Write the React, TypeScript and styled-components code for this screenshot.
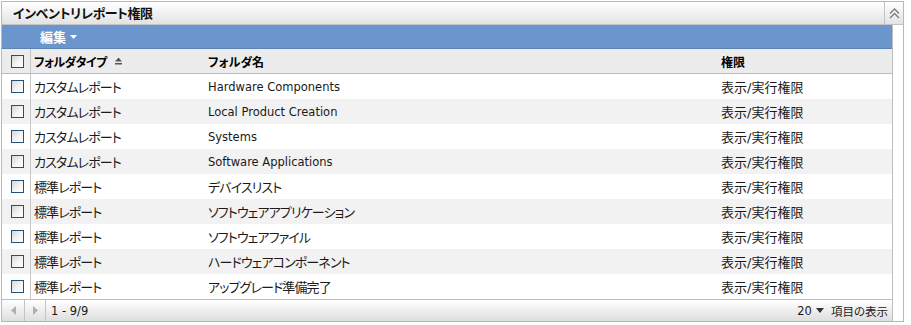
import React from "react";
import styled, { createGlobalStyle } from "styled-components";

const Global = createGlobalStyle`
  html, body { margin: 0; padding: 0; background: #fff; }
  body {
    font-family: "DejaVu Sans", "Noto Sans CJK JP", sans-serif;
    font-size: 12px;
    color: #1a1a1a;
    font-feature-settings: "palt";
  }
`;

const Panel = styled.div`
  box-sizing: border-box;
  width: 903px;
  margin: 1px 0 0 1px;
  border: 1px solid #b8b8b8;
  background: #fff;
`;

const TitleBar = styled.div`
  display: flex;
  height: 23px;
  box-sizing: border-box;
  border-bottom: 1px solid #c2c2c2;
  background: linear-gradient(#ffffff, #e3e3e3);
`;

const TitleText = styled.div`
  flex: 1;
  padding-left: 11px;
  font-family: "Noto Sans CJK JP", sans-serif;
  font-weight: bold;
  font-size: 13px;
  letter-spacing: -0.4px;
  line-height: 22px;
  color: #111;
`;

const CollapseButton = styled.div`
  width: 18px;
  border-left: 1px solid #c2c2c2;
  display: flex;
  align-items: center;
  justify-content: center;
`;

const Body = styled.div`
  display: flex;
  padding-right: 10px;
`;

const TableArea = styled.div`
  flex: 1;
  border-right: 1px solid #bdbdbd;
`;

const Toolbar = styled.div`
  height: 24px;
  box-sizing: border-box;
  background: #6a96cd;
  border-bottom: 1px solid #5b83b6;
  display: flex;
  align-items: center;
  padding-left: 38px;
`;

const EditMenu = styled.div`
  display: flex;
  align-items: center;
  gap: 4px;
  color: #fff;
  font-family: "Noto Sans CJK JP", sans-serif;
  font-weight: bold;
  font-size: 13px;
`;

const Grid = styled.div<{ $bg?: string; $header?: boolean }>`
  display: grid;
  grid-template-columns: 29px 174px 513px 1fr;
  height: 25px;
  box-sizing: border-box;
  background: ${(p) => p.$bg || "#fff"};
  border-bottom: ${(p) => (p.$header ? "1px solid #bcbcbc" : "none")};
  font-weight: ${(p) => (p.$header ? "bold" : "normal")};
  font-size: ${(p) => (p.$header ? "12px" : "13px")};
  color: ${(p) => (p.$header ? "#000" : "#1a1a1a")};
`;

const CheckCell = styled.div`
  border-right: 1px solid #c6c6c6;
  display: flex;
  align-items: center;
  padding-left: 9px;
`;

const Cell = styled.div<{ $latin?: boolean; $tight?: boolean }>`
  display: flex;
  align-items: center;
  gap: 8px;
  padding-left: 3px;
  white-space: nowrap;
  overflow: hidden;
  font-size: ${(p) => (p.$latin ? "11.5px" : "inherit")};
  letter-spacing: ${(p) => (p.$tight ? "-0.9px" : "normal")};
`;

const HeaderLabel = styled.span`
  letter-spacing: -0.6px;
`;

const Box = styled.span`
  display: inline-block;
  width: 13px;
  height: 13px;
  box-sizing: border-box;
  border: 1px solid #24507c;
  background: linear-gradient(135deg, #d6d6d6 0%, #f4f4f4 55%, #ffffff 100%);
`;

const Footer = styled.div`
  display: flex;
  align-items: stretch;
  height: 22px;
  box-sizing: border-box;
  border-top: 1px solid #bcbcbc;
  background: linear-gradient(#ffffff, #dedede);
  font-size: 11.5px;
`;

const NavButton = styled.div<{ $w: number }>`
  width: ${(p) => p.$w}px;
  box-sizing: border-box;
  border-right: 1px solid #c4c4c4;
  display: flex;
  align-items: center;
  justify-content: center;
`;

const PageInfo = styled.div`
  flex: 1;
  display: flex;
  align-items: center;
  padding-left: 5px;
`;

const PageSize = styled.div`
  display: flex;
  align-items: center;
  gap: 4px;
  padding-right: 4px;
`;

const PageLabel = styled.span`
  margin-left: 3px;
  font-size: 11.5px;
`;

const SortIcon = () => (
  <svg width="7" height="8" viewBox="0 0 7 8">
    <polygon points="0,4.5 3.5,0.5 7,4.5" fill="#555" />
    <rect x="0" y="6" width="7" height="1.5" fill="#555" />
  </svg>
);

const rows: [string, string, boolean][] = [
  ["カスタムレポート", "Hardware Components", true],
  ["カスタムレポート", "Local Product Creation", true],
  ["カスタムレポート", "Systems", true],
  ["カスタムレポート", "Software Applications", true],
  ["標準レポート", "デバイスリスト", false],
  ["標準レポート", "ソフトウェアアプリケーション", false],
  ["標準レポート", "ソフトウェアファイル", false],
  ["標準レポート", "ハードウェアコンポーネント", false],
  ["標準レポート", "アップグレード準備完了", false],
];

export default function App() {
  return (
    <>
      <Global />
      <Panel>
        <TitleBar>
          <TitleText>インベントリレポート権限</TitleText>
          <CollapseButton>
            <svg width="11" height="11" viewBox="0 0 11 11">
              <polyline points="1,5.5 5.5,1 10,5.5" fill="none" stroke="#7a7a7a" strokeWidth="1.3" />
              <polyline points="1,10 5.5,5.5 10,10" fill="none" stroke="#7a7a7a" strokeWidth="1.3" />
            </svg>
          </CollapseButton>
        </TitleBar>
        <Body>
          <TableArea>
            <Toolbar>
              <EditMenu>
                編集
                <svg width="7" height="4" viewBox="0 0 7 4">
                  <polygon points="0,0 7,0 3.5,4" fill="#fff" />
                </svg>
              </EditMenu>
            </Toolbar>
            <Grid $header $bg="#ececec">
              <CheckCell>
                <Box />
              </CheckCell>
              <Cell>
                <HeaderLabel>フォルダタイプ</HeaderLabel>
                <SortIcon />
              </Cell>
              <Cell>フォルダ名</Cell>
              <Cell>権限</Cell>
            </Grid>
            {rows.map(([type, name, latin], i) => (
              <Grid key={i} $bg={i % 2 === 1 ? "#f2f2f2" : "#fff"}>
                <CheckCell>
                  <Box />
                </CheckCell>
                <Cell $tight>{type}</Cell>
                <Cell $latin={latin} $tight={!latin}>
                  {name}
                </Cell>
                <Cell>表示/実行権限</Cell>
              </Grid>
            ))}
            <Footer>
              <NavButton $w={23}>
                <svg width="5" height="9" viewBox="0 0 5 9">
                  <polygon points="5,0 0,4.5 5,9" fill="#b0b0b0" />
                </svg>
              </NavButton>
              <NavButton $w={21}>
                <svg width="5" height="9" viewBox="0 0 5 9">
                  <polygon points="0,0 5,4.5 0,9" fill="#b0b0b0" />
                </svg>
              </NavButton>
              <PageInfo>1 - 9/9</PageInfo>
              <PageSize>
                20
                <svg width="8" height="5" viewBox="0 0 8 5">
                  <polygon points="0,0 8,0 4,5" fill="#333" />
                </svg>
                <PageLabel>項目の表示</PageLabel>
              </PageSize>
            </Footer>
          </TableArea>
        </Body>
      </Panel>
    </>
  );
}
